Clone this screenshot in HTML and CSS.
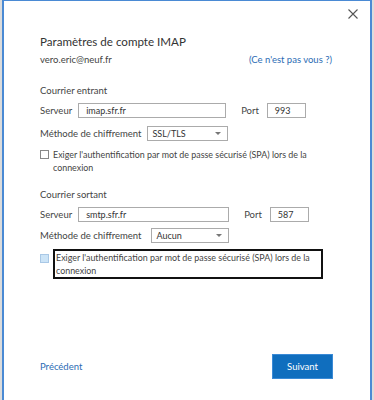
FILE: index.html
```html
<!DOCTYPE html>
<html lang="fr">
<head>
  <meta charset="UTF-8">
  <meta name="viewport" content="width=device-width, initial-scale=1.0">
  <title>Paramètres de compte IMAP</title>
  <link rel="stylesheet" href="styles.css">
</head>
<body>

  <div class="backdrop">
    <div class="dialog">

      <div class="dialog-top">
        <button class="close" aria-label="Fermer">
          <svg width="10" height="10" viewBox="0 0 10 10">
            <path d="M0.5 0.5 L9.5 9.5 M9.5 0.5 L0.5 9.5" stroke="#555" stroke-width="1.1" fill="none"/>
          </svg>
        </button>
      </div>

      <h1 class="title">Paramètres de compte IMAP</h1>
      <div class="account">
        <span>vero.eric@neuf.fr</span>
        <a class="link" href="#">(Ce n'est pas vous ?)</a>
      </div>

      <section class="group incoming">
        <div class="group-title">Courrier entrant</div>
        <div class="row">
          <span class="label">Serveur</span>
          <span class="field server">imap.sfr.fr</span>
          <span class="label port-label">Port</span>
          <span class="field port">993</span>
        </div>
        <div class="row">
          <span class="label">Méthode de chiffrement</span>
          <span class="select">SSL/TLS<span class="arrow"></span></span>
        </div>
        <div class="check">
          <span class="box"></span>
          <span class="check-text">Exiger l'authentification par mot de passe sécurisé (SPA) lors de la connexion</span>
        </div>
      </section>

      <section class="group outgoing">
        <div class="group-title">Courrier sortant</div>
        <div class="row">
          <span class="label">Serveur</span>
          <span class="field server">smtp.sfr.fr</span>
          <span class="label port-label">Port</span>
          <span class="field port">587</span>
        </div>
        <div class="row">
          <span class="label">Méthode de chiffrement</span>
          <span class="select">Aucun<span class="arrow"></span></span>
        </div>
        <div class="check">
          <span class="box hover"></span>
          <span class="check-text focused">Exiger l'authentification par mot de passe sécurisé (SPA) lors de la connexion</span>
        </div>
      </section>

      <div class="footer">
        <a class="link back" href="#">Précédent</a>
        <button class="next">Suivant</button>
      </div>

    </div>
  </div>

</body>
</html>
```

FILE: styles.css
```css
* {
  margin: 0;
  padding: 0;
  box-sizing: border-box;
}

body {
  font-family: Lato, 'Noto Sans', sans-serif;
  background: #dcdcdc;
  height: 400px;
  overflow: hidden;
}

.backdrop {
  padding: 0 2px;
  height: 100%;
}

.dialog {
  background: #fff;
  border: 2px solid #4a8ad4;
  border-top-width: 1px;
  border-bottom: none;
  height: 100%;
  padding: 0 0 0 36px;
  color: #444;
}

.dialog-top {
  display: flex;
  justify-content: flex-end;
  height: 32px;
  padding: 8px 12px 0 0;
}

.close {
  background: none;
  border: none;
  width: 10px;
  height: 10px;
  display: flex;
}

.title {
  font-size: 11.6px;
  font-weight: normal;
  color: #333;
  line-height: 18px;
}

.account {
  display: flex;
  justify-content: space-between;
  font-size: 9.5px;
  line-height: 14px;
  padding-right: 38px;
  margin-top: 2px;
}

.link {
  color: #2b6cb4;
  text-decoration: none;
}

.group {
  margin-top: 17px;
  font-size: 9.5px;
}

.outgoing {
  margin-top: 14px;
}

.group-title {
  line-height: 14px;
}

.row {
  display: flex;
  align-items: center;
  margin-top: 4px;
  height: 16px;
}

.row + .row {
  margin-top: 7px;
}

.outgoing .row + .row {
  margin-top: 5px;
}

.label {
  margin-right: 6px;
}

.field,
.select {
  height: 15px;
  border: 1px solid #ababab;
  font-size: 9px;
  color: #333;
  padding: 0 7px;
  line-height: 13px;
}

.incoming .server {
  width: 148px;
}

.outgoing .server {
  width: 151px;
}

.port-label {
  margin-left: 15px;
  margin-right: 8px;
}

.port {
  width: 39px;
}

.select {
  display: flex;
  justify-content: space-between;
  align-items: center;
  padding: 0 6px 0 4px;
}

.incoming .select {
  width: 81px;
}

.outgoing .select {
  width: 78px;
  margin-left: 4px;
}

.arrow {
  width: 0;
  height: 0;
  border-left: 3px solid transparent;
  border-right: 3px solid transparent;
  border-top: 3px solid #777;
}

.check {
  display: flex;
  align-items: flex-start;
  margin-top: 7px;
  line-height: 13px;
}

.outgoing .check {
  margin-top: 9px;
}

.box {
  flex: none;
  width: 9px;
  height: 9px;
  border: 1px solid #888;
  margin: 2px 4px 0 0;
}

.box.hover {
  background: #cce4f7;
  border-color: #a9c8e6;
}

.check-text {
  width: 270px;
  font-size: 8.9px;
}

.check-text.focused {
  border: 2px solid #111;
  width: 270px;
  padding: 0 0 0 1px;
  margin-top: -3px;
}

.footer {
  display: flex;
  justify-content: space-between;
  align-items: center;
  margin-top: 75px;
  padding-right: 37px;
}

.back {
  font-size: 9.5px;
}

.next {
  width: 61px;
  height: 25px;
  background: #106ebe;
  border: 1px solid #3a8ad6;
  color: #fff;
  font-family: inherit;
  font-size: 9.5px;
}
```
